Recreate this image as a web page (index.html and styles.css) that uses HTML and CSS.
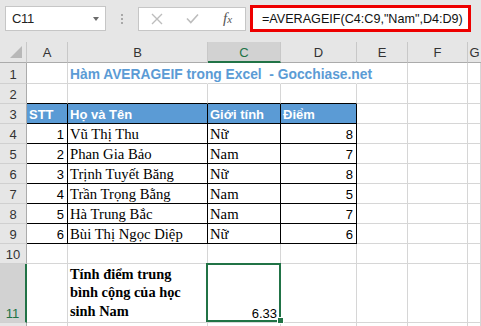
FILE: index.html
```html
<!DOCTYPE html>
<html lang="vi">
<head>
  <meta charset="UTF-8" />
  <title>Hàm AVERAGEIF trong Excel</title>
  <link rel="stylesheet" href="styles.css">
</head>
<body>
  <div class="toolbar">
    <div class="namebox"><span>C11</span><span class="caret"></span></div>
    <div class="grip"><i></i><i></i><i></i></div>
    <div class="fbtns">
      <svg width="12" height="12" viewBox="0 0 12 12"><path d="M1 1L11 11M11 1L1 11" stroke="#bdbdbd" stroke-width="1.4" fill="none"/></svg>
      <svg width="13" height="11" viewBox="0 0 13 11"><path d="M1 5.5L4.8 9.5L12 1.5" stroke="#bdbdbd" stroke-width="1.6" fill="none"/></svg>
      <span class="fx">f<small>x</small></span>
    </div>
    <div class="formula">=AVERAGEIF(C4:C9,"Nam",D4:D9)</div>
  </div>

  <div class="sheet">
    <!-- column headers -->
    <div class="hd corner"><svg width="12" height="12" viewBox="0 0 12 12"><path d="M12 0V12H0Z" fill="#b8b8b8"/></svg></div>
    <div class="hd">A</div>
    <div class="hd">B</div>
    <div class="hd on">C</div>
    <div class="hd">D</div>
    <div class="hd">E</div>
    <div class="hd">F</div>
    <div class="hd last">G</div>

    <!-- 1 -->
    <div class="rh">1</div>
    <div class="c"></div>
    <div class="c open title">Hàm AVERAGEIF trong Excel&nbsp; - Gocchiase.net</div>
    <div class="c open"></div>
    <div class="c open"></div>
    <div class="c"></div>
    <div class="c"></div>
    <div class="c"></div>

    <!-- 2 -->
    <div class="rh">2</div>
    <div class="c top"></div>
    <div class="c top"></div>
    <div class="c top"></div>
    <div class="c top"></div>
    <div class="c"></div>
    <div class="c"></div>
    <div class="c"></div>

    <!-- 3 -->
    <div class="rh">3</div>
    <div class="c tb th">STT</div>
    <div class="c tb th">Họ và Tên</div>
    <div class="c tb th">Giới tính</div>
    <div class="c tb th">Điểm</div>
    <div class="c"></div>
    <div class="c"></div>
    <div class="c"></div>

    <!-- 4 -->
    <div class="rh">4</div>
    <div class="c tb num">1</div>
    <div class="c tb serif">Vũ Thị Thu</div>
    <div class="c tb serif">Nữ</div>
    <div class="c tb num">8</div>
    <div class="c"></div>
    <div class="c"></div>
    <div class="c"></div>

    <!-- 5 -->
    <div class="rh">5</div>
    <div class="c tb num">2</div>
    <div class="c tb serif">Phan Gia Bảo</div>
    <div class="c tb serif">Nam</div>
    <div class="c tb num">7</div>
    <div class="c"></div>
    <div class="c"></div>
    <div class="c"></div>

    <!-- 6 -->
    <div class="rh">6</div>
    <div class="c tb num">3</div>
    <div class="c tb serif">Trịnh Tuyết Băng</div>
    <div class="c tb serif">Nữ</div>
    <div class="c tb num">8</div>
    <div class="c"></div>
    <div class="c"></div>
    <div class="c"></div>

    <!-- 7 -->
    <div class="rh">7</div>
    <div class="c tb num">4</div>
    <div class="c tb serif">Trần Trọng Bằng</div>
    <div class="c tb serif">Nam</div>
    <div class="c tb num">5</div>
    <div class="c"></div>
    <div class="c"></div>
    <div class="c"></div>

    <!-- 8 -->
    <div class="rh">8</div>
    <div class="c tb num">5</div>
    <div class="c tb serif">Hà Trung Bắc</div>
    <div class="c tb serif">Nam</div>
    <div class="c tb num">7</div>
    <div class="c"></div>
    <div class="c"></div>
    <div class="c"></div>

    <!-- 9 -->
    <div class="rh">9</div>
    <div class="c tb num">6</div>
    <div class="c tb serif">Bùi Thị Ngọc Diệp</div>
    <div class="c tb serif">Nữ</div>
    <div class="c tb num">6</div>
    <div class="c"></div>
    <div class="c"></div>
    <div class="c"></div>

    <!-- 10 -->
    <div class="rh">10</div>
    <div class="c"></div>
    <div class="c"></div>
    <div class="c"></div>
    <div class="c"></div>
    <div class="c"></div>
    <div class="c"></div>
    <div class="c"></div>

    <!-- 11 -->
    <div class="rh on">11</div>
    <div class="c"></div>
    <div class="c note">Tính điểm trung bình cộng của học sinh Nam</div>
    <div class="c num sel">6.33<span class="handle"></span></div>
    <div class="c"></div>
    <div class="c"></div>
    <div class="c"></div>
    <div class="c"></div>

    <!-- 12 (only its top edge is in view) -->
    <div class="rh"></div>
    <div class="c"></div>
    <div class="c"></div>
    <div class="c"></div>
    <div class="c"></div>
    <div class="c"></div>
    <div class="c"></div>
    <div class="c"></div>
  </div>
</body>
</html>
```

FILE: styles.css
```css
body { margin: 0; background: #fff; font-family: 'Liberation Sans', Arial, sans-serif; overflow: hidden; }

/* formula toolbar */
.toolbar { height: 37px; padding: 0 0 5px 5px; background: #e6e6e6; display: flex; align-items: center; }
.namebox { width: 101px; height: 25px; box-sizing: border-box; background: #fff; border: 1px solid #c6c6c6; display: flex; align-items: center; justify-content: space-between; padding: 0 6px 0 6px; font-size: 13px; letter-spacing: -0.3px; color: #222; }
.caret { width: 0; height: 0; border-left: 3.5px solid transparent; border-right: 3.5px solid transparent; border-top: 4px solid #6b6b6b; }
.grip { width: 2px; margin: 0 15px; display: flex; flex-direction: column; gap: 2px; }
.grip i { width: 2px; height: 2px; background: #a8a8a8; }
.fbtns { width: 108px; height: 24px; box-sizing: border-box; background: #fff; border: 1px solid #c6c6c6; display: flex; align-items: center; padding: 0 0 0 12px; gap: 23px; }
.fx { font-family: 'Liberation Serif', serif; font-style: italic; font-size: 15px; color: #555; margin-left: 1px; }
.fx small { font-size: 11px; }
.formula { width: 221px; height: 27px; box-sizing: border-box; margin-left: 4px; background: #fff; border: 3px solid #ee0000; padding-left: 9px; display: flex; align-items: center; font-size: 12.6px; color: #111; white-space: nowrap; overflow: hidden; }

/* sheet grid */
.sheet { display: grid; grid-template-columns: 27px 41px 140px 73px 76px 51px 60px 1fr; grid-template-rows: 21px 21px 20px repeat(8, 20px) 59px 20px; }
.sheet > div { box-sizing: border-box; display: flex; align-items: flex-end; min-width: 0; }

.hd { background: #e6e6e6; border-right: 1px solid #c8c8c8; border-bottom: 1px solid #ababab; justify-content: center; align-items: center !important; font-size: 13px; color: #333; padding-top: 1px; }
.hd.last { border-right: 0; }
.hd.on { background: #d2d2d2; color: #217346; border-bottom: 2px solid #217346; }
.corner { justify-content: flex-end !important; align-items: flex-end !important; padding: 0 4px 4px 0; }

.rh { background: #e6e6e6; border-right: 1px solid #ababab; border-bottom: 1px solid #d0d0d0; justify-content: center; font-size: 13px; color: #333; padding-bottom: 1px; }
.rh.on { background: #d2d2d2; color: #217346; border-right: 2px solid #217346; }

.c { border-right: 1px solid #d6d6d6; border-bottom: 1px solid #d6d6d6; padding: 0 2px; white-space: nowrap; font-size: 13px; color: #000; }
.c.open { border-right-color: transparent; overflow: visible; }
.c.top { border-bottom-color: #000; }
.c.tb { border-right-color: #000; border-bottom-color: #000; }

.title { font-weight: bold; font-size: 13.8px; color: #5b9bd5; padding-bottom: 1px; }
.th { background: #5b9bd5; color: #fff; font-weight: bold; padding-bottom: 1px; }
.num { justify-content: flex-end; padding-right: 3px; padding-bottom: 1px; }
.serif { font-family: 'Liberation Serif', 'Times New Roman', serif; font-size: 14.7px; }
.note { font-family: 'Liberation Serif', 'Times New Roman', serif; font-weight: bold; font-size: 14.4px; line-height: 18.5px; white-space: normal !important; padding: 0 12px 2px 2px !important; }

/* active cell */
.sel { position: relative; }
.sel::after { content: ""; position: absolute; left: -2px; top: -1px; right: -1px; bottom: 0; border: 2px solid #217346; }
.handle { position: absolute; right: -4px; bottom: -2px; width: 5px; height: 5px; background: #217346; border: 1px solid #fff; z-index: 1; }
```
